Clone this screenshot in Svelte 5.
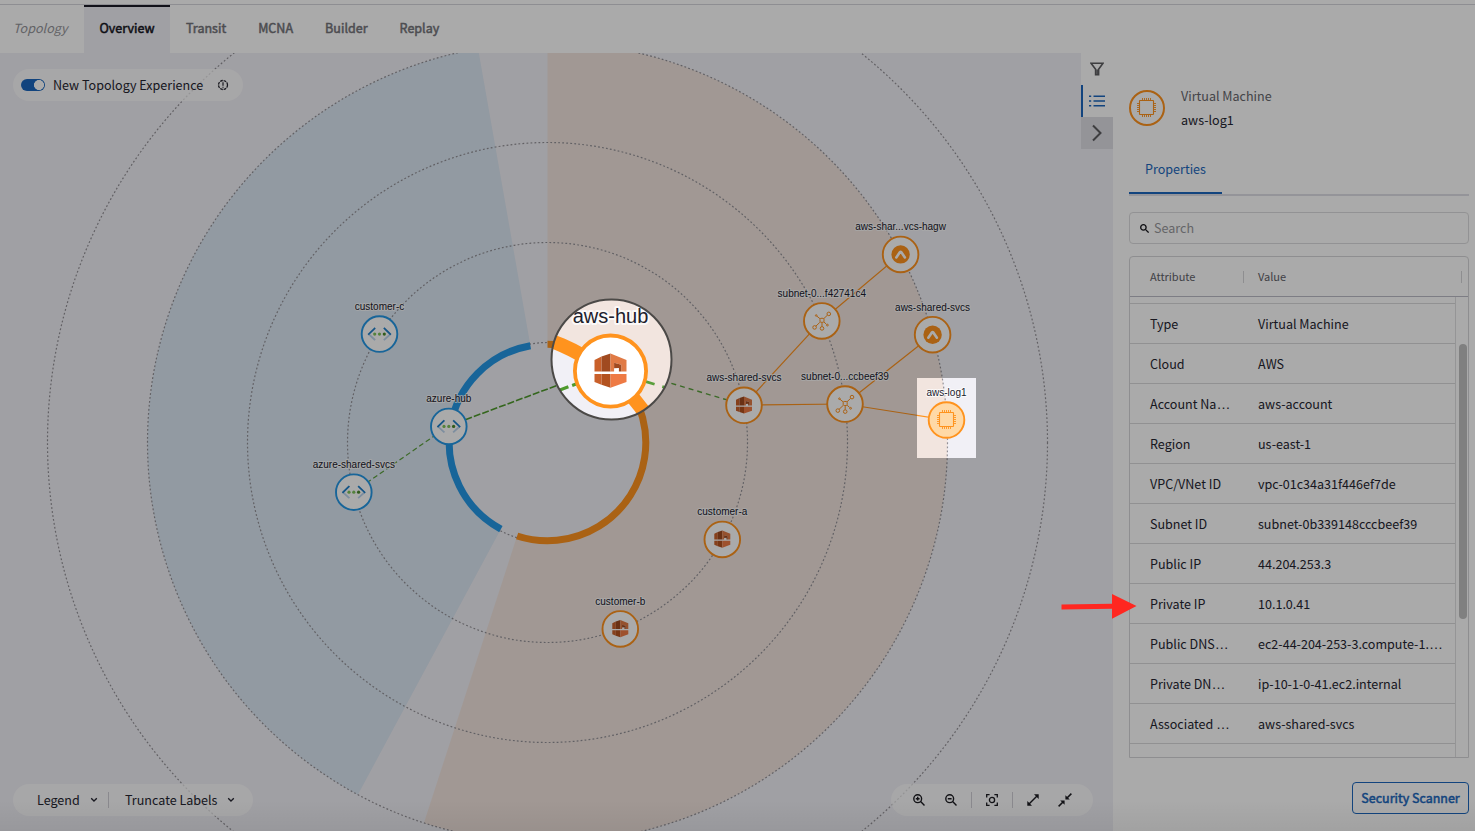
<script>
  const tabs = ['Overview', 'Transit', 'MCNA', 'Builder', 'Replay'];
  const rows = [
    ['Type', 'Virtual Machine'],
    ['Cloud', 'AWS'],
    ['Account Na…', 'aws-account'],
    ['Region', 'us-east-1'],
    ['VPC/VNet ID', 'vpc-01c34a31f446ef7de'],
    ['Subnet ID', 'subnet-0b339148cccbeef39'],
    ['Public IP', '44.204.253.3'],
    ['Private IP', '10.1.0.41'],
    ['Public DNS…', 'ec2-44-204-253-3.compute-1.…'],
    ['Private DN…', 'ip-10-1-0-41.ec2.internal'],
    ['Associated …', 'aws-shared-svcs'],
    ['', '']
  ];
  const cx = 547.5;
  const cy = 442.5;
  const nodes = [
    { x: 379.5, y: 334.1, label: 'customer-c', kind: 'azure' },
    { x: 448.8, y: 426.4, label: 'azure-hub', kind: 'azure' },
    { x: 353.8, y: 492.2, label: 'azure-shared-svcs', kind: 'azure' },
    { x: 611, y: 365.3, label: 'aws-hub', kind: 'aws' },
    { x: 744, y: 405.3, label: 'aws-shared-svcs', kind: 'aws' },
    { x: 722.3, y: 539.4, label: 'customer-a', kind: 'aws' },
    { x: 620.3, y: 628.9, label: 'customer-b', kind: 'aws' },
    { x: 821.8, y: 320.9, label: 'subnet-0...f42741c4', kind: 'subnet' },
    { x: 845, y: 404.1, label: 'subnet-0...ccbeef39', kind: 'subnet' },
    { x: 900.6, y: 254.4, label: 'aws-shar...vcs-hagw', kind: 'gateway' },
    { x: 932.6, y: 334.7, label: 'aws-shared-svcs', kind: 'gateway' },
    { x: 946.5, y: 420, label: 'aws-log1', kind: 'vm' }
  ];
  const links = [
    [744, 405, 821.7, 320.7],
    [821.7, 320.7, 900.6, 254.3],
    [744, 405, 845, 404],
    [845, 404, 932.6, 334.7],
    [845, 404, 946.8, 420]
  ];
  const pins = [-4, -2, 0, 2, 4]
    .map((p) => `M${p} -9.5V-7M${p} 7V9.5M-9.5 ${p}H-7M7 ${p}H9.5`)
    .join('');
  // clockwise angle in degrees, measured from twelve o'clock
  const pt = (r, deg) => {
    const a = (deg * Math.PI) / 180;
    return `${cx + r * Math.sin(a)} ${cy - r * Math.cos(a)}`;
  };
  const sector = (a, b) =>
    `M${pt(100, a)} L${pt(400, a)} A400 400 0 ${b - a > 180 ? 1 : 0} 1 ${pt(400, b)} L${pt(100, b)} A100 100 0 ${b - a > 180 ? 1 : 0} 0 ${pt(100, a)}Z`;
  const arc = (a, b) => `M${pt(98.3, a)} A98.3 98.3 0 ${b - a > 180 ? 1 : 0} 1 ${pt(98.3, b)}`;
</script>

{#snippet chip(dx, dy)}
  <g transform="translate({dx} {dy})" fill="none" stroke="#ff931e">
    <rect x="-7" y="-7" width="14" height="14" rx="0.5" stroke-width="1.1" />
    <path d={pins} stroke-width="0.9" />
  </g>
{/snippet}

{#snippet scene(shown)}
  <rect x="0" y="0" width="1475" height="831" fill="#f1f0f6" />
  <path d={sector(208.3, 350)} fill="#dbe7f3" />
  <path d={sector(0, 198)} fill="#f2e5df" />
  {#each [100, 200, 300, 400, 500] as r}
    <circle {cx} {cy} {r} fill="none" stroke="#929096" stroke-width="1.2" stroke-dasharray="1.8 2.2" />
  {/each}
  <path d={arc(208.3, 350)} fill="none" stroke="#2498e6" stroke-width="7" />
  <path d={arc(0, 198)} fill="none" stroke="#ff931e" stroke-width="7" />
  {#each links as [x1, y1, x2, y2]}
    <line {x1} {y1} {x2} {y2} stroke="#ff931e" stroke-width="1.2" />
  {/each}
  <path d="M353.5 492L448.5 426" stroke="#5a9f3c" stroke-width="1.2" stroke-dasharray="5 3" />
  <path d="M448.5 426L611 365.3" stroke="#4e9a2c" stroke-width="1.6" stroke-dasharray="7 2" />
  <path d="M611 365.3L744 405" stroke="#5a9f3c" stroke-width="1.4" stroke-dasharray="5 4" />
  {#each shown as n}
    <g transform="translate({n.x} {n.y})">
      <circle r="17.8" fill={n.kind === 'vm' ? '#ffd9a6' : '#fff'} stroke={n.kind === 'azure' ? '#2498e6' : '#ff931e'} stroke-width="1.9" />
      {#if n.kind === 'azure'}
        <g fill="none" stroke-width="1.8" stroke-linecap="square">
          <path d="M-10.5 0.4L-5 5.4M10.5 0.4L5 5.4" stroke="#bcd5ef" />
          <path d="M-10.7 0L-5 -5.5M10.7 0L5 -5.5" stroke="#1f7fc9" />
        </g>
        <circle cx="-4.8" r="1.6" fill="#7fc35c" />
        <circle r="1.6" fill="#7fc35c" />
        <circle cx="4.8" r="1.6" fill="#4c8a2c" />
      {:else if n.kind === 'aws'}
        <path d="M-8 -5.6L-4.5 -7.3V0.2H-8Z" fill="#c9602a" />
        <path d="M-4.5 -7.3L0 -8.8V0.2H-4.5Z" fill="#a04a20" />
        <path d="M0 -8.8L8 -5.6V0.2H5.4V-3.2L1.8 -4.2V0.2H0Z" fill="#e07a45" />
        <path d="M1.8 -4.2L5.4 -3.2V0.2H4.2V-1.6L1.8 -1.4Z" fill="#a04a20" />
        <path d="M-8 1.4H-4.5V6.8L-8 5.4Z" fill="#c9602a" />
        <path d="M-4.5 1.4H0V8.3L-4.5 6.8Z" fill="#b3521f" />
        <path d="M0 1.4H8V5.4L0 8.3Z" fill="#ee7a44" />
      {:else if n.kind === 'subnet'}
        <g fill="none" stroke="#ff931e" stroke-width="1">
          <path d="M-1.8 -2.2L-5 -4.8M2 -2.3L5.6 -5.7M-2 1.5L-6 5.3M0.2 2V5.6M2.2 1.2L4.6 3.3" />
          <rect x="-1.8" y="-2.6" width="4" height="4" rx="1" />
          <circle cx="7" cy="-7" r="1.8" />
          <circle cx="-7.2" cy="6.5" r="1.8" />
          <circle cx="0.2" cy="7.5" r="1.8" />
          <circle cx="-5.6" cy="-5.4" r="0.8" />
          <circle cx="5.6" cy="4.2" r="0.9" />
        </g>
      {:else if n.kind === 'gateway'}
        <circle r="9.2" fill="#ff931e" />
        <path d="M-4.3 3L-0.6 -2.3Q0 -3 0.6 -2.3L4.3 3" fill="none" stroke="#fff" stroke-width="2.6" stroke-linecap="round" />
      {:else}
        {@render chip(0, -0.5)}
      {/if}
      <text y="-24.2" class="label">{n.label}</text>
    </g>
  {/each}
{/snippet}

{#snippet cell(value)}
  {#if value.endsWith('…')}{value.slice(0, -1)}<span class="dots">…</span>{:else}{value}{/if}
{/snippet}

<div class="page">
  <nav>
    <span class="title">Topology</span>
    {#each tabs as tab, i}
      <span class="tab" class:active={i === 0}>{tab}</span>
    {/each}
  </nav>

  <main>
    <section class="canvas">
      <svg class="graph" width="1113" height="778" viewBox="0 53 1113 778">
        {@render scene(nodes.filter((n) => n.label !== 'aws-log1' && n.label !== 'aws-hub'))}
      </svg>
      <div class="top">
        <div class="pill toggle-pill">
          <span class="toggle"></span>
          <span>New Topology Experience</span>
          <svg class="info" width="12" height="12" viewBox="0 0 12 12" fill="none" stroke="#252530">
            <circle cx="6" cy="6" r="4.5" stroke-width="1.3" stroke-dasharray="2.7 0.85" />
            <path d="M6 3.2V6.8M6 7.8V8.8" stroke-width="1.2" />
          </svg>
        </div>
        <div class="rail">
          <span class="btn">
            <svg width="14" height="14" viewBox="0 0 14 14" fill="none" stroke="#5d5d61" stroke-width="1.6">
              <path d="M1 1.2H13L8.6 7.2V12.7H5.6V7.2Z" />
              <path d="M7.1 7.5V12" />
            </svg>
          </span>
          <span class="btn selected">
            <svg width="16" height="14" viewBox="0 0 16 14" stroke="#1b67bd" stroke-width="1.5">
              <path d="M4.5 2.2H16M4.5 7H16M4.5 11.8H16M0 2.2H2.2M0 7H2.2M0 11.8H2.2" />
            </svg>
          </span>
          <span class="btn collapse">
            <svg width="12" height="18" viewBox="0 0 12 18" fill="none" stroke="#5d5d61" stroke-width="2">
              <path d="M2 1.5L9.5 9L2 16.5" />
            </svg>
          </span>
        </div>
      </div>
      <div class="bottom">
        <div class="pill menus">
          <span>Legend</span>
          <svg class="chev" width="8" height="6" viewBox="0 0 8 6" fill="none" stroke="#252530" stroke-width="1.3"><path d="M1.2 1.2L4 4L6.8 1.2" /></svg>
          <i></i>
          <span>Truncate Labels</span>
          <svg class="chev" width="8" height="6" viewBox="0 0 8 6" fill="none" stroke="#252530" stroke-width="1.3"><path d="M1.2 1.2L4 4L6.8 1.2" /></svg>
        </div>
        <div class="pill zooms">
          <svg width="12" height="12" viewBox="0 0 12 12" fill="none" stroke="#1c1c22" stroke-width="1.4">
            <circle cx="4.7" cy="4.7" r="3.9" /><path d="M7.6 7.6L11.5 11.5M2.8 4.7H6.6M4.7 2.8V6.6" />
          </svg>
          <svg width="12" height="12" viewBox="0 0 12 12" fill="none" stroke="#1c1c22" stroke-width="1.4">
            <circle cx="4.7" cy="4.7" r="3.9" /><path d="M7.6 7.6L11.5 11.5M2.8 4.7H6.6" />
          </svg>
          <i></i>
          <svg width="12" height="12" viewBox="0 0 12 12" fill="none" stroke="#1c1c22" stroke-width="1.3">
            <path d="M0.7 3.6V0.7H3.6M8.4 0.7H11.3V3.6M11.3 8.4V11.3H8.4M3.6 11.3H0.7V8.4" /><circle cx="6" cy="6" r="2.6" />
          </svg>
          <i></i>
          <svg width="12" height="12" viewBox="0 0 12 12" stroke="#1c1c22" stroke-width="1.5">
            <path d="M2 10L10 2" /><path d="M7 0.3H11.7V5ZM5 11.7H0.3V7Z" fill="#1c1c22" stroke="none" />
          </svg>
          <svg width="14" height="14" viewBox="0 0 14 14" stroke="#1c1c22" stroke-width="1.5">
            <path d="M0.6 13.4L5 9M13.4 0.6L9 5" /><path d="M2.2 7.4H6.6V11.8ZM7.4 2.2V6.6H11.8Z" fill="#1c1c22" stroke="none" />
          </svg>
        </div>
      </div>
    </section>

    <aside>
      <header>
        <svg width="36" height="36" viewBox="-18 -18 36 36">
          <circle r="17" fill="none" stroke="#ff931e" stroke-width="2" />
          {@render chip(-0.5, -0.5)}
        </svg>
        <div>
          <p class="muted">Virtual Machine</p>
          <p>aws-log1</p>
        </div>
      </header>
      <div class="proptabs"><span>Properties</span></div>
      <div class="search">
        <svg width="9" height="9" viewBox="0 0 9 9" fill="none" stroke="#16161c" stroke-width="1.3">
          <circle cx="3.4" cy="3.4" r="2.7" /><path d="M5.4 5.4L8.6 8.6" />
        </svg>
        <span>Search</span>
      </div>
      <div class="table">
        <div class="head">
          <span class="attr">Attribute</span><i></i><span class="val">Value</span><i></i>
        </div>
        <div class="body">
          <div class="rows">
            <div class="row stub"></div>
            {#each rows as [attr, value]}
              <div class="row">
                <span class="attr">{@render cell(attr)}</span>
                <span class="val">{@render cell(value)}</span>
              </div>
            {/each}
          </div>
          <div class="track"><span class="thumb"></span></div>
        </div>
      </div>
      <button>Security Scanner</button>
    </aside>
  </main>

  <div class="shade"></div>

  <svg class="callouts" width="1475" height="831" viewBox="0 0 1475 831">
    <defs>
      <clipPath id="lens"><circle cx="611.5" cy="359.5" r="60" /></clipPath>
      <clipPath id="spot"><rect x="917" y="378" width="59" height="80" /></clipPath>
    </defs>
    <g clip-path="url(#spot)">{@render scene(nodes.filter((n) => n.label === 'aws-log1'))}</g>
    <g clip-path="url(#lens)">
      <g transform="translate(-611.5 -359.5) scale(2)">{@render scene(nodes.filter((n) => n.label === 'aws-hub'))}</g>
    </g>
    <circle cx="611.5" cy="359.5" r="60" fill="none" stroke="#4b4947" stroke-width="2" />
    <path d="M1061.5 604.4L1112 603.8V594L1136.5 606L1112 618.8V608.8L1061.5 609.5Z" fill="#ff2720" />
  </svg>
</div>

<style>
  :global(body) {
    margin: 0;
  }
  .page {
    position: relative;
    width: 1475px;
    height: 831px;
    overflow: hidden;
    display: flex;
    flex-direction: column;
    background: #fff;
    color: #252530;
    font: 12.55px/20px 'Noto Sans CJK SC', 'Noto Sans', sans-serif;
  }
  nav {
    box-sizing: border-box;
    flex: none;
    height: 53px;
    padding-top: 4px;
    display: flex;
    background: linear-gradient(#fff 4px, #d6d5dc 4px, #d6d5dc 5px, #fff 5px);
  }
  .title {
    box-sizing: border-box;
    width: 84px;
    padding-left: 13px;
    line-height: 48px;
    font-style: italic;
    color: #949499;
  }
  .tab {
    box-sizing: border-box;
    height: 49px;
    padding: 0 16px;
    line-height: 47px;
    color: #74747a;
    -webkit-text-stroke: 0.5px currentColor;
  }
  .active {
    margin-top: 1px;
    height: 48px;
    width: 86px;
    padding: 0;
    text-align: center;
    line-height: 42px;
    border-top: 2px solid #1c1c28;
    background: #f1f0f6;
    color: #16161f;
  }
  main {
    flex: 1;
    display: flex;
    min-height: 0;
  }
  .canvas {
    position: relative;
    width: 1113px;
    display: flex;
    flex-direction: column;
    justify-content: space-between;
  }
  .graph {
    position: absolute;
    inset: 0;
  }
  .label {
    font: 10px 'Liberation Sans', Arial, sans-serif;
    text-anchor: middle;
    fill: #20202c;
    stroke: #fff;
    stroke-opacity: 0.75;
    stroke-width: 2px;
    stroke-linejoin: round;
    paint-order: stroke;
  }
  .top,
  .bottom {
    position: relative;
    display: flex;
    justify-content: space-between;
  }
  .top {
    align-items: flex-start;
  }
  .bottom {
    padding: 0 20px 15px 13px;
  }
  .pill {
    box-sizing: border-box;
    height: 32px;
    border-radius: 16px;
    display: flex;
    align-items: center;
    background: rgba(255, 255, 255, 0.7);
  }
  .toggle-pill {
    width: 230px;
    margin: 16px 0 0 13px;
    padding: 0 14px 0 8px;
    gap: 8px;
  }
  .toggle {
    box-sizing: border-box;
    width: 24px;
    height: 12px;
    border-radius: 6px;
    background: radial-gradient(circle at 18px 6px, #fff 4.7px, #1b67bd 5.3px);
  }
  .info {
    margin-left: auto;
  }
  .rail {
    display: flex;
    flex-direction: column;
  }
  .btn {
    box-sizing: border-box;
    width: 32px;
    height: 32px;
    display: flex;
    align-items: center;
    justify-content: center;
    background: #fff;
  }
  .selected {
    border-left: 2px solid #1b67bd;
    padding-right: 2px;
  }
  .collapse {
    background: #dfdee4;
  }
  .menus {
    width: 240px;
    padding: 0 18px 0 24px;
  }
  .menus .chev {
    margin-left: auto;
  }
  .menus span:first-child {
    width: 43px;
  }
  .menus .chev:nth-of-type(1) {
    margin-left: 10px;
  }
  .pill i {
    width: 1px;
    height: 16px;
    background: #cfced6;
  }
  .menus i {
    margin: 0 16px 0 10px;
  }
  .zooms {
    width: 202px;
    padding-left: 22px;
  }
  .zooms i {
    margin: 0 14px;
  }
  .zooms svg + svg {
    margin-left: 19.5px;
  }
  aside {
    box-sizing: border-box;
    width: 362px;
    padding: 34px 6px 0 16px;
    display: flex;
    flex-direction: column;
  }
  header {
    display: flex;
    align-items: center;
    gap: 16px;
    height: 42px;
  }
  p {
    margin: 0;
    line-height: 24px;
  }
  .muted {
    color: #66666c;
  }
  .proptabs {
    margin-top: 16px;
    height: 49px;
    border-bottom: 2px solid #dfdee6;
    display: flex;
  }
  .proptabs span {
    box-sizing: border-box;
    width: 93px;
    height: 49px;
    text-align: center;
    line-height: 48px;
    color: #1b67bd;
    border-bottom: 2px solid #1b67bd;
  }
  .search {
    box-sizing: border-box;
    margin-top: 16px;
    height: 32px;
    border: 1px solid #dcdcde;
    border-radius: 4px;
    padding-left: 10px;
    display: flex;
    align-items: center;
    gap: 5px;
    color: #98989c;
  }
  .table {
    box-sizing: border-box;
    margin-top: 12px;
    height: 502px;
    border: 1px solid #d6d6d8;
    border-radius: 4px 4px 0 0;
    display: flex;
    flex-direction: column;
  }
  .head {
    box-sizing: border-box;
    flex: none;
    height: 40px;
    border-bottom: 1px solid #bcbcc6;
    display: flex;
    align-items: center;
    padding: 0 6px 0 20px;
    font-size: 11px;
    color: #62626a;
  }
  .head span {
    padding-bottom: 2px;
  }
  .head .attr {
    width: 93px;
  }
  .head .val {
    flex: 1;
    padding-left: 14px;
  }
  .head i {
    width: 1px;
    height: 12px;
    background: #d6d6d8;
  }
  .body {
    flex: 1;
    display: flex;
    min-height: 0;
  }
  .rows {
    width: 325px;
    overflow: hidden;
    border-right: 1px solid #e0e0e2;
  }
  .row {
    box-sizing: border-box;
    height: 40px;
    border-bottom: 1px solid #dadadc;
    padding-left: 20px;
    display: flex;
    align-items: center;
    white-space: nowrap;
  }
  .stub {
    height: 7px;
  }
  .row .attr {
    width: 108px;
  }
  .dots {
    font-family: 'Liberation Sans', sans-serif;
    font-size: 14px;
    line-height: 1;
  }
  .track {
    flex: 1;
    padding-left: 3px;
  }
  .thumb {
    display: block;
    width: 8px;
    height: 275px;
    margin-top: 47px;
    border-radius: 4px;
    background: #c1c1c1;
  }
  button {
    align-self: flex-end;
    width: 117px;
    height: 32px;
    margin-top: 24px;
    padding: 0;
    border: 1px solid #1b67bd;
    border-radius: 4px;
    background: #fff;
    color: #1b67bd;
    font: 12.5px/20px 'Noto Sans CJK SC', 'Noto Sans', sans-serif;
    -webkit-text-stroke: 0.5px currentColor;
  }
  .shade {
    position: absolute;
    inset: 0;
    background: linear-gradient(transparent 800px, rgba(0, 0, 0, 0.05)), rgba(0, 0, 0, 0.335);
  }
  .callouts {
    position: absolute;
    inset: 0;
  }
</style>
